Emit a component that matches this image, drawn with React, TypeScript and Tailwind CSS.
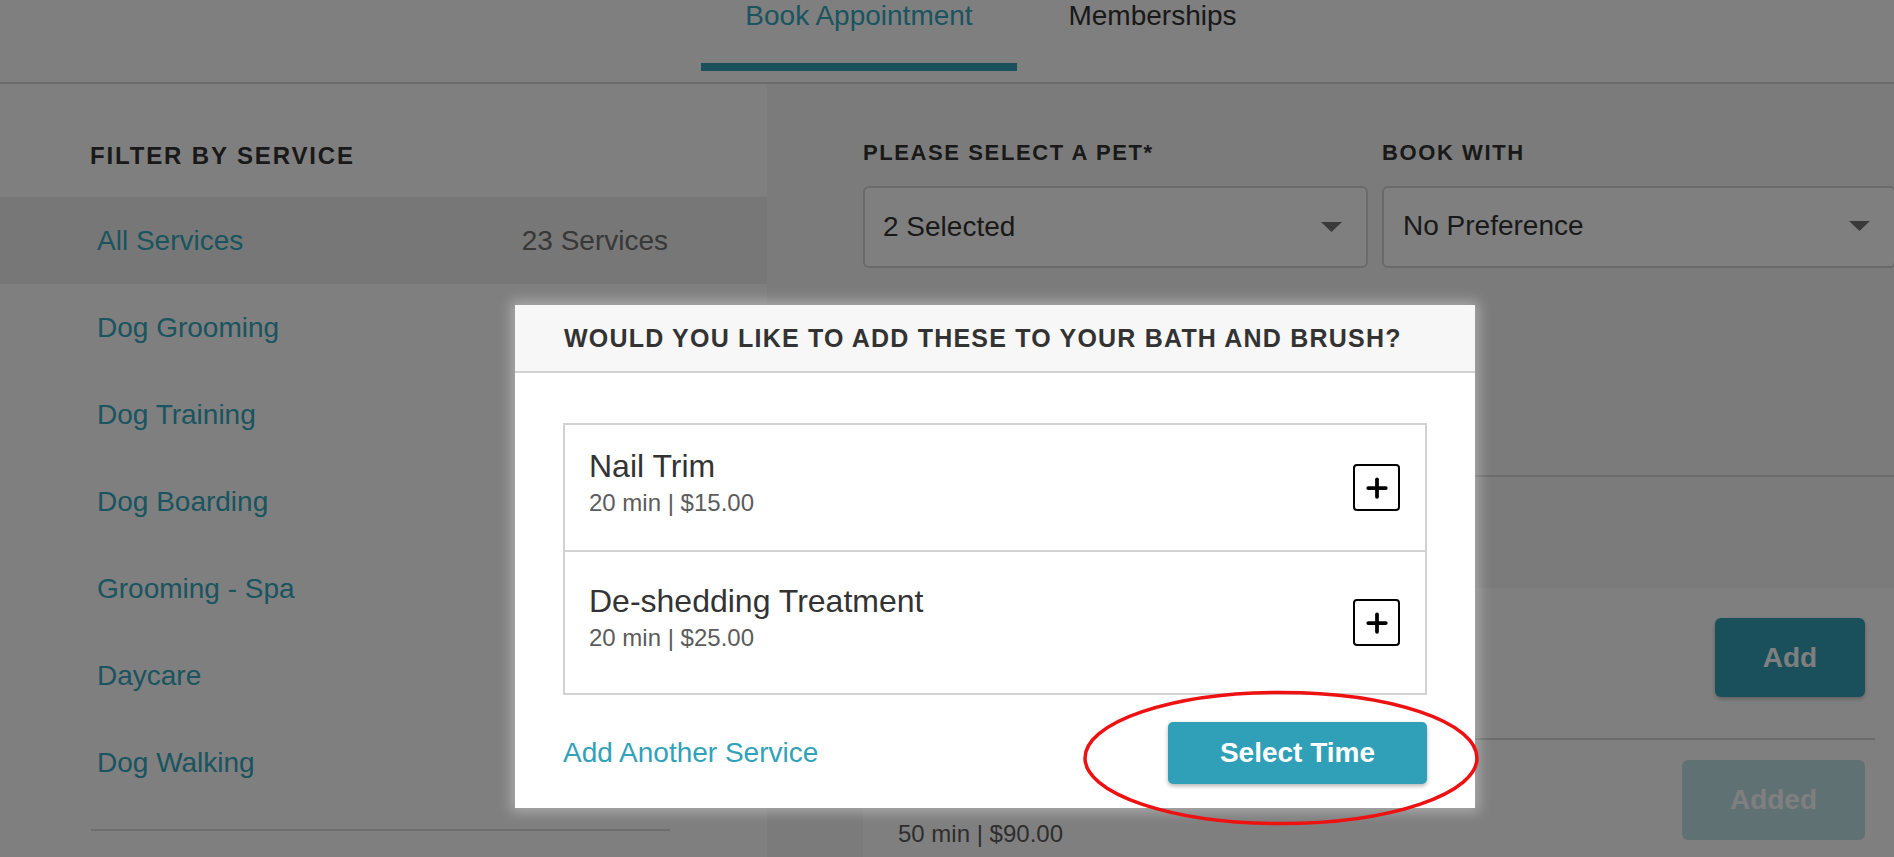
import { Plus } from 'lucide-react';

const categories = [
  'All Services',
  'Dog Grooming',
  'Dog Training',
  'Dog Boarding',
  'Grooming - Spa',
  'Daycare',
  'Dog Walking',
];

const addOns = [
  { name: 'Nail Trim', meta: '20 min | $15.00', height: 'h-[127px] border-b-2 border-[#d2d2d2]' },
  { name: 'De-shedding Treatment', meta: '20 min | $25.00', height: 'h-[141px]' },
];

function Caret() {
  return (
    <svg width="21" height="10" viewBox="0 0 21 10" className="shrink-0">
      <path d="M0 0 L21 0 L10.5 10 Z" fill="#757575" />
    </svg>
  );
}

export default function App() {
  return (
    <div className="relative h-[857px] w-[1894px] overflow-hidden bg-white font-['Liberation_Sans',Arial,sans-serif]">
      {/* top tabs */}
      <header className="flex h-[84px] border-b-2 border-[#d6d6d6] bg-white pl-[701px]">
        <div className="flex w-[316px] flex-col items-center">
          <span className="text-[28px] leading-[32px] text-[#35a8bf]">Book Appointment</span>
          <span className="mt-[31px] h-[8px] w-full bg-[#33a0b6]" />
        </div>
        <div className="ml-[8px] flex w-[255px] flex-col items-center">
          <span className="text-[28px] leading-[32px] text-[#333]">Memberships</span>
        </div>
      </header>

      <div className="flex h-[773px]">
        {/* filter sidebar */}
        <aside className="w-[767px] shrink-0 bg-white">
          <h3 className="ml-[90px] mt-[58px] text-[24px] font-bold leading-[28px] tracking-[1.85px] text-[#333]">
            FILTER BY SERVICE
          </h3>
          <ul className="mt-[27px]">
            {categories.map((c, i) => (
              <li
                key={c}
                className={`flex h-[87px] items-center justify-between pl-[97px] pr-[99px] text-[28px] ${
                  i === 0 ? 'bg-[#eeeeee]' : ''
                }`}
              >
                <span className="text-[#35a8bf]">{c}</span>
                {i === 0 && <span className="text-[#707070]">23 Services</span>}
              </li>
            ))}
          </ul>
          <div className="ml-[91px] mt-[23px] h-[2px] w-[579px] bg-[#dcdcdc]" />
        </aside>

        {/* booking panel */}
        <main className="flex-1 overflow-hidden bg-[#f6f6f6] pl-[96px]">
          <div className="mt-[56px] grid w-[1033px] grid-cols-[505px_514px] gap-x-[14px]">
            <label className="text-[22px] font-bold leading-[26px] tracking-[1.6px] text-[#333]">
              PLEASE SELECT A PET*
            </label>
            <label className="text-[22px] font-bold leading-[26px] tracking-[1.6px] text-[#333]">
              BOOK WITH
            </label>
            <div className="mt-[20px] flex h-[82px] items-center justify-between rounded-md border-2 border-[#d4d4d4] bg-white pl-[18px] pr-[24px]">
              <span className="text-[28px] text-[#333]">2 Selected</span>
              <Caret />
            </div>
            <div className="mt-[20px] flex h-[82px] items-center justify-between rounded-md border-2 border-[#d4d4d4] bg-white pb-[2px] pl-[19px] pr-[24px]">
              <span className="text-[28px] text-[#333]">No Preference</span>
              <Caret />
            </div>
          </div>

          <div className="mt-[207px] h-[2px] w-full bg-[#d6d6d6]" />

          <section className="mt-[111px] h-[300px] bg-white">
            <div className="flex h-[150px] items-start justify-end pr-[29px] pt-[30px]">
              <button className="h-[79px] w-[150px] rounded-md bg-[#33a0b6] text-[28px] font-bold text-white shadow-[0_2px_4px_rgba(0,0,0,0.25)]">
                Add
              </button>
            </div>
            <div className="ml-[34px] mr-[19px] h-[2px] bg-[#d6d6d6]" />
            <div className="flex items-start justify-between pr-[29px]">
              <span className="ml-[35px] mt-[80px] text-[24px] leading-[28px] text-[#5c5c5c]">50 min | $90.00</span>
              <button className="mt-[20px] h-[80px] w-[183px] rounded-md bg-[#c1e2e9] text-[28px] font-bold text-white">
                Added
              </button>
            </div>
          </section>
        </main>
      </div>

      {/* dim overlay */}
      <div className="absolute inset-0 bg-black/50" />

      {/* add-on modal */}
      <div className="absolute left-[515px] top-[305px] w-[960px] bg-white shadow-[0_0_12px_4px_rgba(255,255,255,0.35)]">
        <div className="flex h-[68px] items-center border-b-2 border-[#d2d2d2] bg-[#f7f7f7] px-[49px]">
          <h2 className="pt-[2px] text-[25px] font-bold tracking-[1.2px] text-[#333]">
            WOULD YOU LIKE TO ADD THESE TO YOUR BATH AND BRUSH?
          </h2>
        </div>
        <div className="px-[48px] pb-[24px] pt-[50px]">
          <div className="border-2 border-[#d2d2d2]">
            {addOns.map((a) => (
              <div key={a.name} className={`flex items-center justify-between pl-[24px] pr-[25px] ${a.height}`}>
                <div className="pb-[10px]">
                  <div className="text-[32px] leading-[36px] text-[#333]">{a.name}</div>
                  <div className="mt-[5px] text-[24px] leading-[28px] text-[#5c5c5c]">{a.meta}</div>
                </div>
                <button className="flex h-[47px] w-[47px] items-center justify-center rounded-[4px] border-2 border-black bg-white">
                  <Plus size={30} strokeWidth={3} color="#000" />
                </button>
              </div>
            ))}
          </div>
          <div className="mt-[27px] flex items-center justify-between">
            <a className="text-[28px] text-[#31a2b9]">Add Another Service</a>
            <button className="h-[62px] w-[259px] rounded-[5px] bg-[#30a0b8] text-[28px] font-bold text-white shadow-[0_2px_4px_rgba(0,0,0,0.3)]">
              Select Time
            </button>
          </div>
        </div>
      </div>

      {/* annotation ring */}
      <svg className="absolute left-[1082px] top-[690px]" width="398" height="136" viewBox="0 0 398 136">
        <ellipse cx="199" cy="68" rx="196" ry="65.5" fill="none" stroke="#ee1111" strokeWidth="3.5" />
      </svg>
    </div>
  );
}
